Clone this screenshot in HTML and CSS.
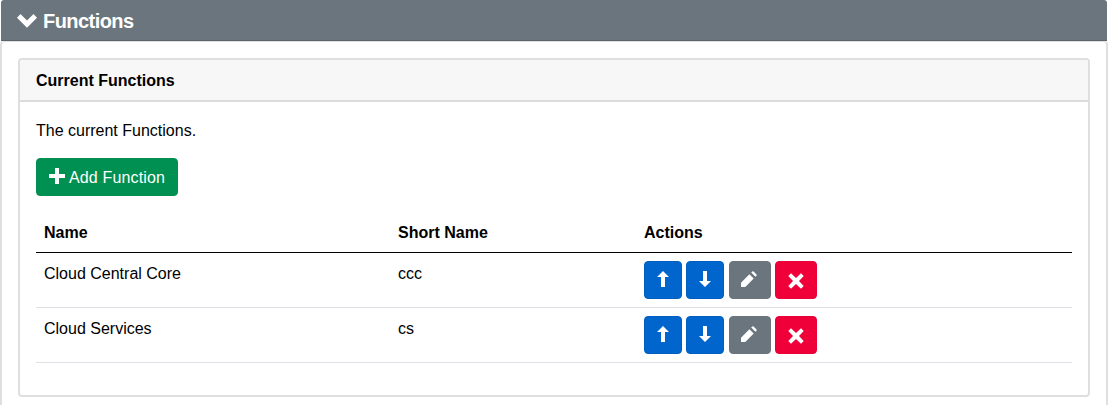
FILE: index.html
```html
<!DOCTYPE html>
<html lang="en">
<head>
<meta charset="utf-8">
<title>Functions</title>
<link rel="stylesheet" href="styles.css">
</head>
<body>
<svg class="sprite" aria-hidden="true">
  <symbol id="up" viewBox="0 0 12 16"><path d="M6 0 12 6H8V16H4V6H0Z"/></symbol>
  <symbol id="down" viewBox="0 0 12 16"><path d="M4 0H8V10H12L6 16 0 10H4Z"/></symbol>
  <symbol id="pencil" viewBox="0 0 16 16"><path d="M8.4 3.3 12.7 7.6 4.3 16H.6Q0 16 0 15.4V11.7ZM10.2 1.6 11.3.5Q12 0 12.6.5L15.5 3.4Q16 4 15.5 4.7L14.4 5.8Z"/></symbol>
  <symbol id="cross" viewBox="0 0 16 16"><path d="M3 .3 8 5 13 .3 15.7 3 11 8 15.7 13 13 15.7 8 11 3 15.7 .3 13 5 8 .3 3Z"/></symbol>
</svg>
<section class="panel">
  <header class="panel-header">
    <svg class="chevron" viewBox="0 0 20 14"><path d="M3.5 0 10 6.5 16.5 0 20 3.7 10 13.7 0 3.7Z"/></svg>
    <h2 class="panel-title">Functions</h2>
  </header>
  <div class="panel-body">
    <section class="card">
      <h3 class="card-header">Current Functions</h3>
      <div class="card-body">
        <p class="intro">The current Functions.</p>
        <button class="btn add"><svg class="plus" viewBox="0 0 16 16"><path d="M6 0H10V6H16V10H10V16H6V10H0V6H6Z"/></svg><span class="add-label">Add Function</span></button>
        <table class="table">
          <thead>
            <tr><th class="col-name">Name</th><th class="col-short">Short Name</th><th>Actions</th></tr>
          </thead>
          <tbody>
            <tr>
              <td>Cloud Central Core</td><td>ccc</td>
              <td class="cell-actions"><div class="actions">
                <button class="btn move"><svg class="arrow"><use href="#up"/></svg></button>
                <button class="btn move"><svg class="arrow"><use href="#down"/></svg></button>
                <button class="btn edit"><svg class="pencil"><use href="#pencil"/></svg></button>
                <button class="btn delete"><svg class="cross"><use href="#cross"/></svg></button>
              </div></td>
            </tr>
            <tr>
              <td>Cloud Services</td><td>cs</td>
              <td class="cell-actions"><div class="actions">
                <button class="btn move"><svg class="arrow"><use href="#up"/></svg></button>
                <button class="btn move"><svg class="arrow"><use href="#down"/></svg></button>
                <button class="btn edit"><svg class="pencil"><use href="#pencil"/></svg></button>
                <button class="btn delete"><svg class="cross"><use href="#cross"/></svg></button>
              </div></td>
            </tr>
          </tbody>
        </table>
      </div>
    </section>
  </div>
</section>
</body>
</html>
```
FILE: styles.css
```css
* { box-sizing: border-box; }
html, body { height: 100%; }
body {
  margin: 0;
  background: #fff;
  color: #000;
  font: 16px/24px "Liberation Sans", Arial, sans-serif;
}
svg { display: block; fill: #fff; }
.sprite { display: none; }
.panel {
  display: flex;
  flex-direction: column;
  width: 1108px;
  height: 100%;
}
.panel-header {
  display: flex;
  align-items: center;
  gap: 6px;
  height: 41px;
  margin: 0 1px;
  padding: 0 16px;
  background: #6a757d;
  border-bottom: 1px solid #5b656e;
  border-radius: 3px 3px 0 0;
}
.chevron { width: 20px; height: 14px; margin-top: 2px; }
.panel-title {
  margin: 1px 0 0;
  color: #fff;
  font-size: 20px;
  line-height: 24px;
  letter-spacing: -0.55px;
}
.panel-body {
  flex: 1;
  padding: 16px 16px 0;
  border: 2px solid #dfdfdf;
  border-top-width: 1px;
  border-bottom: 0;
  border-radius: 4px 4px 0 0;
}
.card {
  height: 339px;
  border: 2px solid #dfdfdf;
  border-radius: 4px;
}
.card-header {
  height: 42px;
  margin: 0;
  padding: 9px 16px 7px;
  background: #f7f7f7;
  border-bottom: 2px solid #dcdcdc;
  border-radius: 2px 2px 0 0;
  font-size: 16px;
  line-height: 24px;
}
.card-body { padding: 17px 16px 16px; }
.intro { margin: 0 0 15px; }
.btn {
  display: flex;
  align-items: center;
  justify-content: center;
  height: 38px;
  padding: 0;
  border: 1px solid;
  border-radius: 4px;
  color: #fff;
  font: inherit;
}
.add {
  width: 142px;
  gap: 4px;
  justify-content: flex-start;
  padding-left: 12px;
  background: #009051;
  border-color: #008f50;
}
.plus { width: 16px; height: 16px; margin-top: -2px; }
.add-label { margin-top: 2px; color: #fff; letter-spacing: 0.15px; }
.table {
  width: 1036px;
  margin-top: 16px;
  table-layout: fixed;
  border-collapse: separate;
  border-spacing: 0;
}
.table th, .table td { padding: 9px 8px 7px; text-align: left; vertical-align: top; }
.table th { height: 41px; border-bottom: 1px solid #000; }
.table td { height: 55px; border-bottom: 1px solid #dee2e6; }
.table .cell-actions { padding: 8px; }
.col-name { width: 354px; }
.col-short { width: 246px; }
.actions { display: flex; }
.move { width: 38px; margin-right: 4px; background: #0065cc; border-color: #005fbf; }
.move + .edit { margin-left: 1px; }
.edit { width: 42px; margin-right: 4px; background: #6a757d; border-color: #6a757d; }
.delete { width: 42px; background: #ef0038; border-color: #e90037; }
.arrow { width: 12px; height: 16px; margin: -2px 1px 0 0; }
.pencil { width: 16px; height: 16px; margin: -2px 2px 0 0; }
.cross { width: 16px; height: 16px; margin-top: 1px; }
```
